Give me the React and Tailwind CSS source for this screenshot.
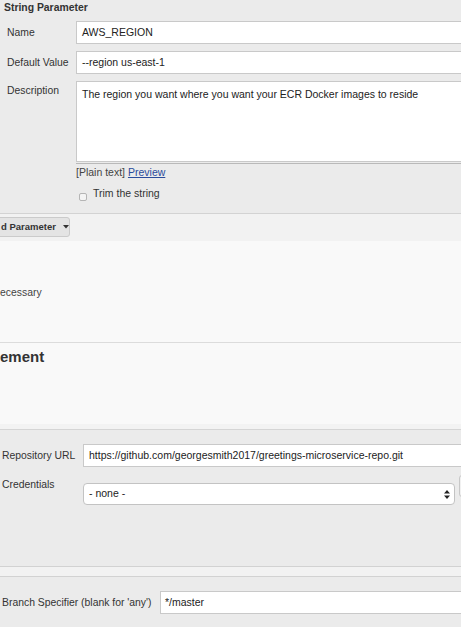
import React from "react";

const font = { fontFamily: '"Liberation Sans", Arial, Helvetica, sans-serif' };

function TextInput({ value, left = "pl-[5px]" }) {
  return (
    <div className={`flex-1 min-w-[420px] h-[23px] bg-white border border-[#c9c9c9] ${left} flex items-center text-[10.5px] text-[#222]`}>
      {value}
    </div>
  );
}

export default function App() {
  return (
    <div className="w-[461px] h-[627px] overflow-hidden bg-[#ebebeb] text-[#333]" style={font}>
      {/* String Parameter block */}
      <div className="h-[214px] bg-[#ebebeb] border-b border-[#d3d3d3] overflow-hidden">
        <div className="h-[21px] pl-[4px] pt-[1px] text-[10.4px] font-bold leading-[14px] text-[#333]">
          String Parameter
        </div>
        <div className="flex items-center h-[23px]">
          <div className="w-[76px] shrink-0 pl-[7px] text-[10.4px]">Name</div>
          <TextInput value="AWS_REGION" />
        </div>
        <div className="flex items-center h-[23px] mt-[7px]">
          <div className="w-[76px] shrink-0 pl-[7px] text-[10.4px]">Default Value</div>
          <TextInput value="--region us-east-1" />
        </div>
        <div className="flex items-start mt-[7px]">
          <div className="w-[76px] shrink-0 pl-[7px] pt-[3px] text-[10.4px] leading-[14px]">Description</div>
          <div className="flex-1 min-w-[420px] h-[81px] bg-white border border-[#c9c9c9] pl-[5px] pt-[5px] text-[10.5px] leading-[14px] text-[#222]">
            The region you want where you want your ECR Docker images to reside
          </div>
        </div>
        <div className="ml-[76px] mt-[1px] h-[1px] bg-[#b9b9b9] min-w-[420px] relative">
          <div className="absolute right-[-40px] top-[-1px] w-[3px] h-[2px] bg-[#888]" />
        </div>
        <div className="ml-[76px] mt-[1px] text-[10.5px] leading-[14px] text-[#444]">
          [Plain text]{" "}
          <span className="text-[#2a4c9c] underline">Preview</span>
        </div>
        <div className="flex items-start ml-[79px] mt-[7px]">
          <div className="w-[8px] h-[8px] mt-[7px] rounded-[2px] border border-[#b5b5b5] bg-[#f4f4f4]" />
          <div className="ml-[6px] text-[10.5px] leading-[14px] text-[#333]">Trim the string</div>
        </div>
      </div>

      {/* Add Parameter band */}
      <div className="h-[27px] bg-[#f2f2f2] pt-[3px]">
        <div className="h-[20px] w-[71px] -ml-[1px] flex items-center bg-[#e4e4e4] border border-[#cbcbcb] rounded-r-[3px]">
          <span className="pl-[1px] text-[9.5px] font-bold text-[#333]">d Parameter</span>
          <svg className="ml-[7px]" width="6" height="4" viewBox="0 0 6 4">
            <path d="M0 0 H6 L3 3.5 Z" fill="#333" />
          </svg>
        </div>
      </div>

      {/* Light area */}
      <div className="h-[101px] bg-[#f9f9f9] pt-[45px]">
        <div className="text-[10.4px] leading-[14px] text-[#444]">ecessary</div>
      </div>
      <div className="border-t border-[#dcdcdc] bg-[#f9f9f9] h-[82px]">
        <div className="pt-[4px] text-[15px] leading-[20px] font-bold text-[#333]">ement</div>
      </div>
      <div className="h-[5px] bg-[#f3f3f3]" />

      {/* SCM block */}
      <div className="border-t border-[#d5d5d5] bg-[#ebebeb] h-[137px] pt-[14px] overflow-hidden">
        <div className="flex items-center h-[23px]">
          <div className="w-[83px] shrink-0 pl-[2px] text-[10.4px]">Repository URL</div>
          <TextInput value="https://github.com/georgesmith2017/greetings-microservice-repo.git" />
        </div>
        <div className="flex items-start mt-[11px]">
          <div className="w-[83px] shrink-0 pl-[2px] text-[10.4px] leading-[14px]">Credentials</div>
          <div className="w-[372px] shrink-0 h-[22px] mt-[5px] bg-white border border-[#c3c3c3] rounded-[4px] flex items-center justify-between pl-[5px] pr-[4px] text-[10.5px] text-[#222]">
            <span>- none -</span>
            <svg width="6" height="9" viewBox="0 0 6 9">
              <path d="M0 3.5 L3 0 L6 3.5 Z M0 5.5 L3 9 L6 5.5 Z" fill="#222" />
            </svg>
          </div>
          <div className="ml-[4px] shrink-0 w-[12px] h-[22px] mt-[-3px] rounded-l-[3px] border border-[#c8c8c8] bg-[#f1f1f1]" />
        </div>
      </div>
      <div className="h-[11px] border-t border-b border-[#d2d2d2] bg-[#f2f2f2]" />
      <div className="bg-[#ebebeb] pt-[14px] h-[60px]">
        <div className="flex items-center h-[23px]">
          <div className="w-[160px] shrink-0 pl-[2px] text-[10.4px] whitespace-nowrap">Branch Specifier (blank for 'any')</div>
          <TextInput value="*/master" left="pl-[4px]" />
        </div>
      </div>
    </div>
  );
}
